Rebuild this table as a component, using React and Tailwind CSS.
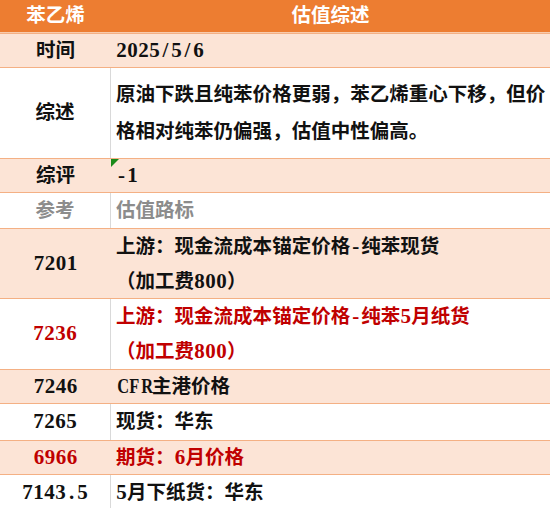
import React from 'react';

const RED = 'text-[#C00000]';

// alternating peach / white rows of the valuation table
const rows = [
  { key: '时间', val: '2025/5/6', h: 'h-[35px]', peach: true },
  {
    key: '综述',
    val: ['原油下跌且纯苯价格更弱，苯乙烯重心下移，但价', '格相对纯苯仍偏强，估值中性偏高。'],
    h: 'h-[90px]',
    lead: 'leading-[37px]',
  },
  { key: '综评', val: '-1', h: 'h-[35px]', peach: true, flag: true },
  { key: '参考', val: '估值路标', h: 'h-[35px]', gray: true },
  {
    key: '7201',
    val: ['上游：现金流成本锚定价格-纯苯现货', '（加工费800）'],
    h: 'h-[71px]',
    peach: true,
    lead: 'leading-[34px]',
  },
  {
    key: '7236',
    val: ['上游：现金流成本锚定价格-纯苯5月纸货', '（加工费800）'],
    h: 'h-[70px]',
    red: true,
    lead: 'leading-[34px]',
  },
  { key: '7246', val: 'CFR主港价格', h: 'h-[35px]', peach: true },
  { key: '7265', val: '现货：华东', h: 'h-[36px]' },
  { key: '6966', val: '期货：6月价格', h: 'h-[35px]', peach: true, red: true },
  { key: '7143.5', val: '5月下纸货：华东', h: 'h-[35px]' },
];

// the sheet font sets latin as half-width cells, so each ascii char gets a fixed box
function Mixed({ text }) {
  return Array.from(text).map((ch, i) => {
    if (/[A-Za-z]/.test(ch)) {
      return (
        <span key={i} className="inline-block w-[12px] text-center text-[21px] scale-x-[0.78]">
          {ch}
        </span>
      );
    }
    if (/[\x21-\x7E]/.test(ch)) {
      return (
        <span key={i} className="inline-block w-[11px] text-center text-[21px]">
          {ch}
        </span>
      );
    }
    return <React.Fragment key={i}>{ch}</React.Fragment>;
  });
}

function Row({ row }) {
  const color = row.red ? RED : row.gray ? 'text-[#8c8c8c]' : 'text-[#111]';
  const bg = row.peach ? 'bg-[#FCE4D6] border-y border-[#F4B084]' : 'bg-white';
  const lines = Array.isArray(row.val) ? row.val : [row.val];
  return (
    <div className={`flex shrink-0 box-border ${row.h} ${bg} ${color}`}>
      <div
        className={`w-[111px] shrink-0 flex items-center justify-center ${
          row.peach ? '' : 'border-r border-[#D9D9D9]'
        }`}
      >
        <div className="whitespace-nowrap">
          <Mixed text={row.key} />
        </div>
      </div>
      <div className={`relative flex-1 flex flex-col justify-center pl-[5px] ${row.lead || ''}`}>
        {row.flag && (
          <div className="absolute left-0 top-0 w-0 h-0 border-t-[8px] border-t-[#1a8a1a] border-r-[8px] border-r-transparent" />
        )}
        {lines.map((l, i) => (
          <div key={i} className="whitespace-nowrap">
            <Mixed text={l} />
          </div>
        ))}
      </div>
    </div>
  );
}

export default function App() {
  return (
    <div className="w-[550px] h-[508px] overflow-hidden flex flex-col bg-white font-bold text-[19.5px] font-['Liberation_Serif','Noto_Sans_CJK_SC',serif]">
      <div className="flex h-[33px] shrink-0 bg-[#ED7D31] text-white border-b border-[#F8CBAD]">
        <div className="w-[111px] flex items-center justify-center">苯乙烯</div>
        <div className="flex-1 flex items-center justify-center">估值综述</div>
      </div>
      {rows.map((r) => (
        <Row key={r.key} row={r} />
      ))}
    </div>
  );
}
